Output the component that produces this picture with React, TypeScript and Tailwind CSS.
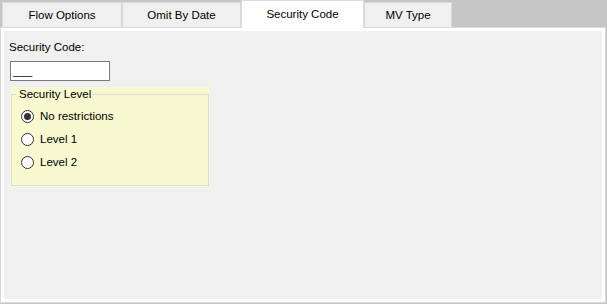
import React from 'react';

const tabs = ['Flow Options', 'Omit By Date', 'Security Code', 'MV Type'];
const tabWidths = ['w-[120px]', 'w-[119px]', 'w-[123px]', 'w-[88px]'];

const Radio: React.FC<{ label: string; checked?: boolean }> = ({ label, checked }) => (
  <label className="flex h-[23px] items-center gap-[6px]">
    <span className="flex h-[13px] w-[13px] items-center justify-center rounded-full border border-[#333333] bg-white">
      {checked ? <span className="h-[7px] w-[7px] rounded-full bg-[#333333]" /> : null}
    </span>
    <span>{label}</span>
  </label>
);

const App: React.FC = () => {
  const [active] = React.useState(2);

  return (
    <div className="flex h-[304px] w-[607px] flex-col bg-[#c6c6c6] font-['Liberation_Sans',Arial,sans-serif] text-[11.5px] text-black">
      <div className="relative z-10 flex h-[27px] items-start pl-[2px]">
        {tabs.map((t, i) =>
          i === active ? (
            <div
              key={t}
              className={`${tabWidths[i]} flex h-[28px] items-center justify-center border-x border-t border-[#dcdcdc] bg-white`}
            >
              {t}
            </div>
          ) : (
            <div
              key={t}
              className={`${tabWidths[i]} mt-[2px] flex h-[26px] items-center justify-center border border-[#d9d9d9] bg-[#f0f0f0] pt-[1px]`}
            >
              {t}
            </div>
          )
        )}
      </div>
      <div className="mr-[1px] mb-[1px] flex-1 border border-[#dadada] bg-white p-[3px]">
        <div className="h-full bg-[#f0f0f0] pl-[5px] pt-[9px]">
          <div className="leading-[14px]">Security Code:</div>
          <div className="mt-[7px] ml-[1px] flex h-[20px] w-[100px] items-end border border-[#7a7a7a] bg-white px-[2px] pb-[3px] leading-[12px]">
            ___
          </div>
          <div className="mt-[6px] ml-[1px] h-[100px] w-[200px] bg-[#f9f9d1] px-[1px] pb-[1px] pt-[1px]">
            <fieldset className="h-full border border-[#dcdcdc] pl-[9px] pt-[5px]">
              <legend className="ml-[-4px] px-[2px] leading-[12px]">Security Level</legend>
              <Radio label="No restrictions" checked />
              <Radio label="Level 1" />
              <Radio label="Level 2" />
            </fieldset>
          </div>
        </div>
      </div>
    </div>
  );
};

export default App;
